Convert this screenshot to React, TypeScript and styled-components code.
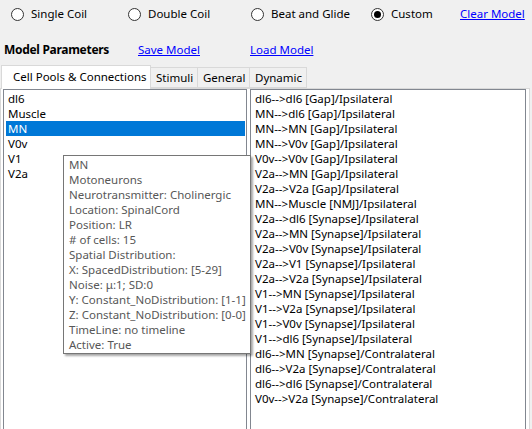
import React from "react";
import styled, { createGlobalStyle } from "styled-components";

const Global = createGlobalStyle`
  html, body { margin: 0; padding: 0; background: #f0f0f0; overflow: hidden; }
  body { font-family: "Noto Sans", "Open Sans", sans-serif; font-size: 11.5px; color: #000; }
  #root { width: 532px; height: 429px; overflow: hidden; }
`;

const Window = styled.div`
  width: 532px;
  height: 429px;
  display: flex;
  flex-direction: column;
  position: relative;
  overflow: hidden;
  & > * { flex-shrink: 0; }
`;

const RadioRow = styled.div`
  display: flex;
  align-items: center;
  height: 28px;
  padding-left: 11px;
`;

const RadioItem = styled.label<{ $w: number }>`
  display: flex;
  align-items: center;
  gap: 7px;
  width: ${(p) => p.$w}px;
  line-height: 16px;
`;

const RadioCircle = styled.span<{ $on?: boolean }>`
  box-sizing: border-box;
  width: 13px;
  height: 13px;
  border-radius: 50%;
  border: 1px solid #333;
  background: #fff;
  display: flex;
  align-items: center;
  justify-content: center;
  &::after {
    content: "";
    display: ${(p) => (p.$on ? "block" : "none")};
    width: 7px;
    height: 7px;
    border-radius: 50%;
    background: #000;
  }
`;

const Link = styled.span`
  color: #0000ff;
  text-decoration: underline;
  line-height: 16px;
`;

const ParamRow = styled.div`
  display: grid;
  grid-template-columns: 134px 112px auto;
  align-items: center;
  height: 16px;
  margin-top: 13px;
  padding-left: 4px;
`;

const Bold = styled.span`
  font-weight: 700;
  font-size: 12px;
  letter-spacing: -0.3px;
`;

const TabStrip = styled.div`
  display: flex;
  align-items: flex-end;
  margin-top: 8px;
  padding-left: 1px;
  height: 23px;
  position: relative;
  z-index: 2;
`;

const Tab = styled.div<{ $active?: boolean; $w: number }>`
  box-sizing: border-box;
  width: ${(p) => p.$w}px;
  height: ${(p) => (p.$active ? 24 : 21)}px;
  margin-bottom: ${(p) => (p.$active ? -1 : 0)}px;
  border: 1px solid #d9d9d9;
  border-bottom: ${(p) => (p.$active ? "none" : "1px solid #d9d9d9")};
  margin-left: ${(p) => (p.$active ? 0 : -1)}px;
  background: ${(p) => (p.$active ? "#fff" : "#f0f0f0")};
  display: flex;
  align-items: center;
  padding-left: ${(p) => (p.$active ? 11 : 5)}px;
  padding-bottom: ${(p) => (p.$active ? 3 : 0)}px;
  white-space: nowrap;
`;

const TabPage = styled.div`
  box-sizing: border-box;
  width: 530px;
  height: 345px;
  border: 1px solid #d9d9d9;
  background: #fff;
  display: grid;
  grid-template-columns: 244px 276px;
  column-gap: 3px;
  padding: 0 0 0 2px;
`;

const ListBox = styled.div`
  box-sizing: border-box;
  border: 1px solid #828790;
  background: #fff;
  padding: 1px 1px;
  height: 360px;
`;

const Item = styled.div<{ $sel?: boolean; $pad: number }>`
  height: 15px;
  line-height: 15px;
  padding-left: ${(p) => p.$pad}px;
  margin-left: ${(p) => (p.$sel ? 1 : 0)}px;
  background: ${(p) => (p.$sel ? "#0078d7" : "transparent")};
  color: ${(p) => (p.$sel ? "#fff" : "#000")};
  white-space: nowrap;
`;

const Tooltip = styled.div`
  position: absolute;
  left: 63px;
  top: 155px;
  width: 188px;
  height: 199px;
  box-sizing: border-box;
  border: 1px solid #767676;
  background: #fff;
  box-shadow: 2px 2px 2px rgba(0, 0, 0, 0.35);
  padding: 1px 0 0 5px;
  color: #575757;
  z-index: 5;
`;

const TipLine = styled.div`
  height: 15px;
  line-height: 15px;
  white-space: nowrap;
`;

const pools = ["dl6", "Muscle", "MN", "V0v", "V1", "V2a"];
const conns = [
  "dl6-->dl6 [Gap]/Ipsilateral",
  "MN-->dl6 [Gap]/Ipsilateral",
  "MN-->MN [Gap]/Ipsilateral",
  "MN-->V0v [Gap]/Ipsilateral",
  "V0v-->V0v [Gap]/Ipsilateral",
  "V2a-->MN [Gap]/Ipsilateral",
  "V2a-->V2a [Gap]/Ipsilateral",
  "MN-->Muscle [NMJ]/Ipsilateral",
  "V2a-->dl6 [Synapse]/Ipsilateral",
  "V2a-->MN [Synapse]/Ipsilateral",
  "V2a-->V0v [Synapse]/Ipsilateral",
  "V2a-->V1 [Synapse]/Ipsilateral",
  "V2a-->V2a [Synapse]/Ipsilateral",
  "V1-->MN [Synapse]/Ipsilateral",
  "V1-->V2a [Synapse]/Ipsilateral",
  "V1-->V0v [Synapse]/Ipsilateral",
  "V1-->dl6 [Synapse]/Ipsilateral",
  "dl6-->MN [Synapse]/Contralateral",
  "dl6-->V2a [Synapse]/Contralateral",
  "dl6-->dl6 [Synapse]/Contralateral",
  "V0v-->V2a [Synapse]/Contralateral",
];
const tip = [
  "MN",
  "Motoneurons",
  "Neurotransmitter: Cholinergic",
  "Location: SpinalCord",
  "Position: LR",
  "# of cells: 15",
  "Spatial Distribution:",
  "X: SpacedDistribution: [5-29]",
  "Noise: \u03bc:1; SD:0",
  "Y: Constant_NoDistribution: [1-1]",
  "Z: Constant_NoDistribution: [0-0]",
  "TimeLine: no timeline",
  "Active: True",
];

const radios = [
  { label: "Single Coil", w: 117 },
  { label: "Double Coil", w: 123 },
  { label: "Beat and Glide", w: 120 },
  { label: "Custom", w: 89, on: true },
];

export default function App() {
  return (
    <>
      <Global />
      <Window>
        <RadioRow>
          {radios.map((r) => (
            <RadioItem key={r.label} $w={r.w}>
              <RadioCircle $on={r.on} />
              {r.label}
            </RadioItem>
          ))}
          <Link>Clear Model</Link>
        </RadioRow>
        <ParamRow>
          <Bold>Model Parameters</Bold>
          <Link>Save Model</Link>
          <Link>Load Model</Link>
        </ParamRow>
        <TabStrip>
          <Tab $active $w={150}>Cell Pools &amp; Connections</Tab>
          <Tab $w={48}>Stimuli</Tab>
          <Tab $w={53}>General</Tab>
          <Tab $w={58}>Dynamic</Tab>
        </TabStrip>
        <TabPage>
          <ListBox>
            {pools.map((p) => (
              <Item key={p} $sel={p === "MN"} $pad={p === "MN" ? 2 : 3}>
                {p}
              </Item>
            ))}
          </ListBox>
          <ListBox>
            {conns.map((c, i) => (
              <Item key={i} $pad={3}>
                {c}
              </Item>
            ))}
          </ListBox>
        </TabPage>
        <Tooltip>
          {tip.map((t, i) => (
            <TipLine key={i}>{t}</TipLine>
          ))}
        </Tooltip>
      </Window>
    </>
  );
}
